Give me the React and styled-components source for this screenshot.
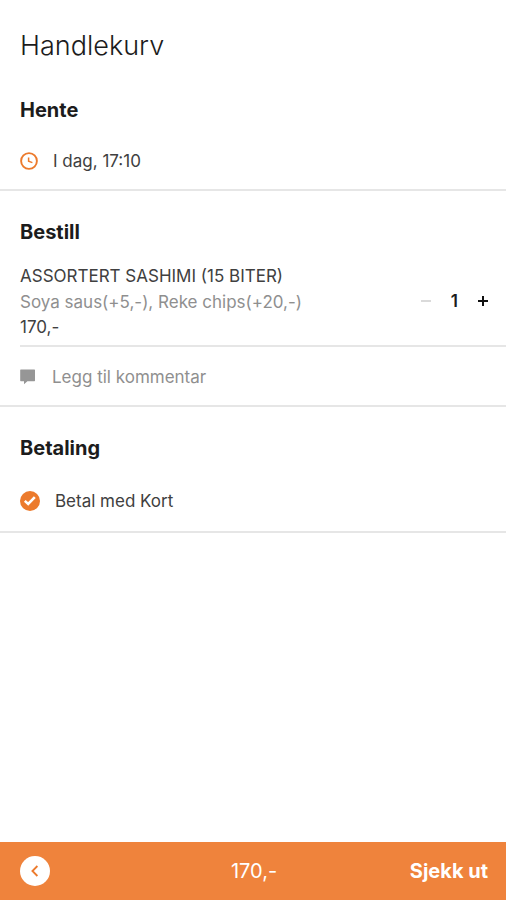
import React, { useState } from 'react';
import styled, { createGlobalStyle, ThemeProvider } from 'styled-components';

const theme = {
  colors: {
    orange: '#ef833c',
    icon: '#ec7a2c',
    text: '#1c1c1c',
    body: '#404040',
    grey: '#8f8f8f',
    line: '#e6e6e6',
    white: '#ffffff',
  },
  fontSize: {
    s: '17px',
    m: '20px',
    l: '27px',
  },
};

const App = () => {
  const [count, setCount] = useState(1);
  const total = `${count * 170},-`;

  return (
    <ThemeProvider theme={theme}>
      <GlobalStyle />
      <Wrapper>
        <Main>
          <Title>Handlekurv</Title>
          <Section>
            <Heading>Hente</Heading>
            <Row>
              <ClockIcon />
              <span>I dag, 17:10</span>
            </Row>
          </Section>
          <Section>
            <Heading>Bestill</Heading>
            <Product>
              <div>
                <ProductName>ASSORTERT SASHIMI (15 BITER)</ProductName>
                <Extras>Soya saus(+5,-), Reke chips(+20,-)</Extras>
                <Price>170,-</Price>
              </div>
              <Counter>
                <CounterButton
                  type="button"
                  aria-label="Færre"
                  disabled={count === 1}
                  onClick={() => setCount(count - 1)}
                >
                  <MinusIcon />
                </CounterButton>
                <Count>{count}</Count>
                <CounterButton type="button" aria-label="Flere" onClick={() => setCount(count + 1)}>
                  <PlusIcon />
                </CounterButton>
              </Counter>
            </Product>
            <CommentRow htmlFor="comment">
              <CommentIcon />
              <CommentInput id="comment" type="text" aria-label="Legg til kommentar" placeholder="Legg til kommentar" />
            </CommentRow>
          </Section>
          <Section>
            <Heading>Betaling</Heading>
            <PaymentRow htmlFor="card">
              <RadioWrapper>
                <Radio id="card" type="radio" name="payment" defaultChecked />
                <CheckIcon />
              </RadioWrapper>
              <span>Betal med Kort</span>
            </PaymentRow>
          </Section>
        </Main>
        <Footer>
          <BackButton type="button" aria-label="Tilbake">
            <BackIcon />
          </BackButton>
          <Total>{total}</Total>
          <CheckoutButton type="button">Sjekk ut</CheckoutButton>
        </Footer>
      </Wrapper>
    </ThemeProvider>
  );
};

const ClockIcon = () => (
  <svg width="18" height="18" viewBox="0 0 18 18" fill="none" stroke={theme.colors.icon} aria-hidden="true">
    <circle cx="9" cy="9" r="7.9" strokeWidth="1.9" />
    <path d="M8.6 5.4V9.3L12.4 10.6" strokeWidth="1.5" />
  </svg>
);

const CommentIcon = () => (
  <svg width="16" height="16" viewBox="0 0 16 16" fill="#969696" aria-hidden="true">
    <path d="M0.8 0.5H14.4Q15 0.5 15 1.1V11.6Q15 12.2 14.4 12.2H7.4L4 15.2V12.2H0.8Q0.2 12.2 0.2 11.6V1.1Q0.2 0.5 0.8 0.5Z" />
  </svg>
);

const CheckIcon = () => (
  <svg width="20" height="20" viewBox="0 0 20 20" fill="none" aria-hidden="true">
    <circle cx="10" cy="10" r="10" fill={theme.colors.icon} />
    <path d="M4.8 9.9L8.2 13L14.8 6.2" stroke="#ffffff" strokeWidth="2.6" />
  </svg>
);

const MinusIcon = () => (
  <svg width="10" height="10" viewBox="0 0 10 10" aria-hidden="true">
    <path d="M0 5H10" stroke="#dadada" strokeWidth="2" />
  </svg>
);

const PlusIcon = () => (
  <svg width="10" height="10" viewBox="0 0 10 10" aria-hidden="true">
    <path d="M0 5H10M5 0V10" stroke="#111111" strokeWidth="2" />
  </svg>
);

const BackIcon = () => (
  <svg width="30" height="30" viewBox="0 0 30 30" fill="none" aria-hidden="true">
    <path d="M17.4 10L12.4 15L17.4 20" stroke={theme.colors.icon} strokeWidth="1.8" />
  </svg>
);

const GlobalStyle = createGlobalStyle`
  *, *::before, *::after {
    box-sizing: border-box;
  }
  body {
    margin: 0;
    background: #ffffff;
    font-family: 'Inter', 'Liberation Sans', sans-serif;
  }
  button, input {
    font-family: inherit;
  }
`;

const Wrapper = styled.div`
  display: flex;
  flex-direction: column;
  min-height: 100vh;
  color: ${({ theme }) => theme.colors.text};
  font-size: ${({ theme }) => theme.fontSize.s};
`;

const Main = styled.main`
  flex: 1;
`;

const Title = styled.h1`
  margin: 0;
  padding: 28px 20px 5px;
  font-size: ${({ theme }) => theme.fontSize.l};
  font-weight: 300;
  line-height: 36px;
`;

const Section = styled.section`
  padding: 23px 0 0 20px;
  border-bottom: 2px solid ${({ theme }) => theme.colors.line};
`;

const Heading = styled.h2`
  margin: 0;
  font-size: ${({ theme }) => theme.fontSize.m};
  font-weight: 700;
  line-height: 36px;
`;

const Row = styled.div`
  display: flex;
  align-items: center;
  gap: 15px;
  height: 61px;
  padding-top: 5px;
  color: ${({ theme }) => theme.colors.body};
`;

const PaymentRow = styled(Row).attrs({ as: 'label' })`
  height: 65px;
`;

const CommentRow = styled.label`
  display: flex;
  align-items: center;
  gap: 16px;
  height: 58px;
  padding: 2px 20px 0 0;
`;

const CommentInput = styled.input`
  flex: 1;
  min-width: 0;
  padding: 0;
  border: 0;
  outline: 0;
  background: transparent;
  color: ${({ theme }) => theme.colors.body};
  font-size: ${({ theme }) => theme.fontSize.s};
  line-height: 24px;
  &::placeholder {
    color: ${({ theme }) => theme.colors.grey};
    opacity: 1;
  }
`;

const Product = styled.div`
  display: flex;
  align-items: center;
  justify-content: space-between;
  padding: 13px 18px 6px 0;
  border-bottom: 2px solid ${({ theme }) => theme.colors.line};
`;

const ProductName = styled.h3`
  margin: 0;
  color: ${({ theme }) => theme.colors.body};
  font-size: ${({ theme }) => theme.fontSize.s};
  font-weight: 400;
  line-height: 26px;
`;

const Extras = styled.p`
  margin: 0;
  color: ${({ theme }) => theme.colors.grey};
  line-height: 26px;
`;

const Price = styled.p`
  margin: 0;
  color: ${({ theme }) => theme.colors.body};
  line-height: 24px;
`;

const Counter = styled.div`
  display: flex;
  align-items: center;
  gap: 20px;
`;

const CounterButton = styled.button`
  display: flex;
  padding: 0;
  border: 0;
  background: transparent;
  cursor: pointer;
`;

const Count = styled.span`
  font-weight: 600;
  line-height: 24px;
`;

const RadioWrapper = styled.span`
  display: grid;
  > * {
    grid-area: 1 / 1;
  }
`;

const Radio = styled.input`
  width: 20px;
  height: 20px;
  margin: 0;
  appearance: none;
`;

const Footer = styled.footer`
  display: grid;
  grid-template-columns: 1fr auto 1fr;
  align-items: center;
  height: 58px;
  padding: 0 18px 0 20px;
  background: ${({ theme }) => theme.colors.orange};
  color: ${({ theme }) => theme.colors.white};
  font-size: ${({ theme }) => theme.fontSize.m};
`;

const BackButton = styled.button`
  display: flex;
  justify-self: start;
  padding: 0;
  border: 0;
  border-radius: 50%;
  background: ${({ theme }) => theme.colors.white};
  cursor: pointer;
`;

const Total = styled.span`
  font-weight: 400;
`;

const CheckoutButton = styled.button`
  justify-self: end;
  padding: 0;
  border: 0;
  background: transparent;
  color: inherit;
  font-size: inherit;
  font-weight: 700;
  cursor: pointer;
`;

export default App;
